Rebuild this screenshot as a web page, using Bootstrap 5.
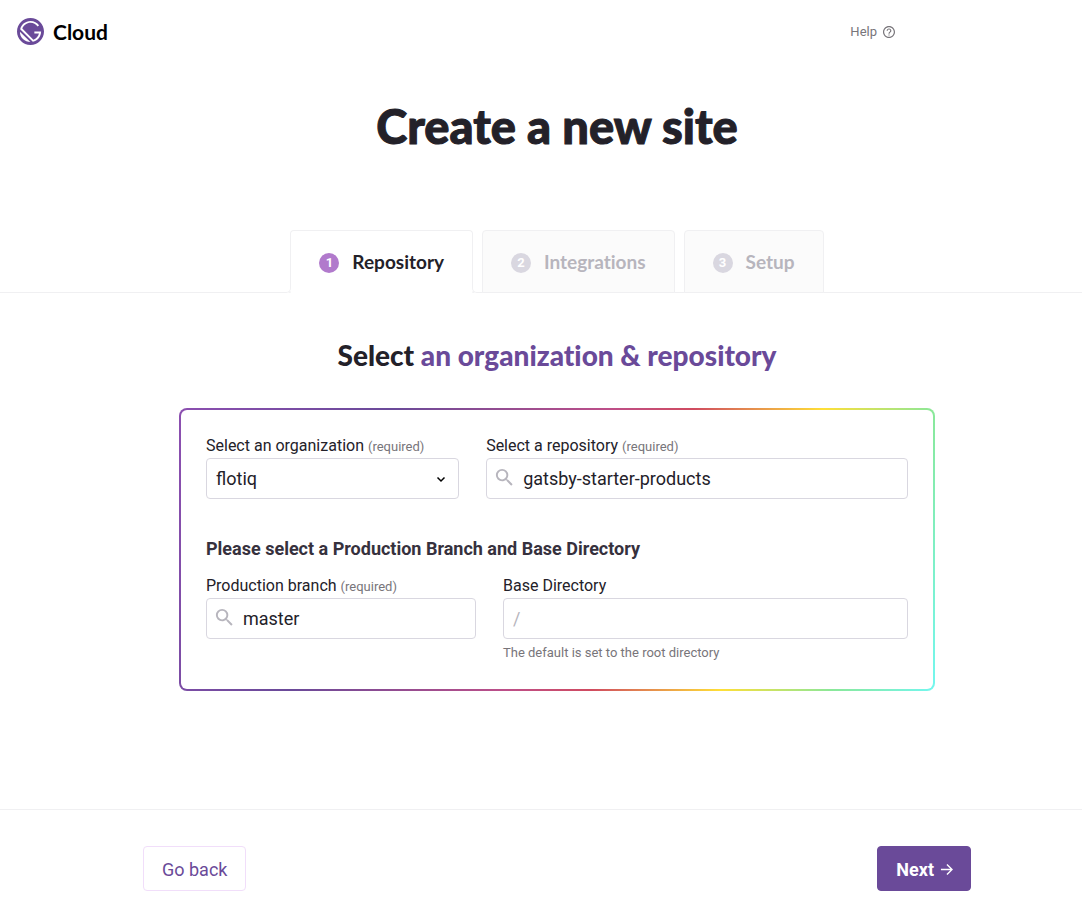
<!DOCTYPE html>
<html lang="en">
<head>
<meta charset="utf-8">
<meta name="viewport" content="width=device-width, initial-scale=1">
<title>Create a new site – Cloud</title>
<link href="https://cdn.jsdelivr.net/npm/bootstrap@5.3.0/dist/css/bootstrap.min.css" rel="stylesheet">
<style>
:root { --ink: #232129; --purple: #6a4a99; --line: #f0f0f2; --field: #d9d7e0; --muted: #78757a; --gutter: 32px; }
body { font-family: Roboto, "Liberation Sans", sans-serif; color: var(--ink); background: #fff; }
.display-face { font-family: "Futura PT", Lato, "Open Sans", sans-serif; font-variant-ligatures: none; }
.site-header { height: 63px; padding-left: 17px; padding-right: 187px; }
.brand { gap: 9px; color: #000; font-size: 21px; font-weight: 700; }
.help-link { gap: 6px; color: var(--muted); font-size: 13px; }
.offset-block { padding-left: var(--gutter); }
.page-title { font-size: 47px; line-height: 56px; font-weight: 900; margin: 35px 0 76px; -webkit-text-stroke: 1px currentColor; }
.steps { border-bottom: 1px solid var(--line); gap: 9px; }
.step { position: relative; display: flex; align-items: center; gap: 13px; height: 63px; margin-bottom: -1px; padding: 2px 28px 0; border: 1px solid var(--line); border-radius: 4px 4px 0 0; background: #fbfbfb; color: #b7b5bd; font-size: 19px; font-weight: 700; text-decoration: none; }
.step-number { width: 20px; height: 20px; border-radius: 50%; background: #d9d7e0; color: #fff; font: 700 13px/20px Roboto, sans-serif; text-align: center; }
.step.current { background: #fff; color: var(--ink); border-bottom-color: #fff; }
.step.current .step-number { background: #b17acc; }
.step.current::before, .step.current::after { content: ""; position: absolute; bottom: -1px; width: 6px; height: 6px; background: #fff; border: 0 solid var(--line); border-bottom-width: 1px; }
.step.current::before { right: 100%; border-right-width: 1px; border-bottom-right-radius: 5px; box-shadow: 1px 0 #fff; }
.step.current::after { left: 100%; border-left-width: 1px; border-bottom-left-radius: 5px; box-shadow: -1px 0 #fff; }
.section-title { font-size: 28px; line-height: 32px; font-weight: 900; margin: 46px 0 37px; }
.section-title span { color: var(--purple); }
.repo-panel { max-width: 756px; padding: 24px 25px 26px; border: 2px solid transparent; border-radius: 8px;
  background: linear-gradient(#fff, #fff) padding-box,
    linear-gradient(110deg, #8c4fb0 0%, #6a4a99 25%, #bd4f89 50%, #d04b60 60%, #ffdf37 75%, #8ae89a 88%, #73f7f0 100%) border-box; }
.field-row { display: grid; column-gap: 27px; row-gap: 16px; }
@media (min-width: 640px) {
  .field-row.source { grid-template-columns: 3fr 5fr; }
  .field-row.branch { grid-template-columns: 2fr 3fr; }
}
.field-label { display: block; font-size: 16px; line-height: 24px; }
.field-label small { font-size: 13px; line-height: 1; color: var(--muted); }
.repo-panel .form-control, .repo-panel .form-select { height: 41px; padding: 0 9px; border: 1px solid var(--field); border-radius: 4px; color: var(--ink); font-size: 18px; line-height: 39px; }
.repo-panel .form-control::placeholder { color: #b7b5bd; opacity: 1; }
.repo-panel .form-select { background-image: url("data:image/svg+xml,%3Csvg xmlns='http://www.w3.org/2000/svg' viewBox='0 0 10 10'%3E%3Cpath d='M1.500 3.500 5 7l3.500-3.500' fill='none' stroke='%23000' stroke-width='1.500'/%3E%3C/svg%3E"); background-size: 10px 10px; background-position: right 12px center; }
.search-box { position: relative; }
.repo-panel .search-box .form-control { padding-left: 36px; }
.search-box svg { position: absolute; left: 7px; top: 8px; }
.panel-heading { font-size: 18px; line-height: 24px; font-weight: 700; color: #36313d; margin: 38px 0 13px; }
.hint { font-size: 13px; line-height: 20px; color: var(--muted); margin: 4px 0 0; }
.site-footer { border-top: 1px solid var(--line); padding-top: 36px; padding-bottom: 20px; }
.footer-inner { max-width: 828px; }
.footer-inner .btn { height: 45px; padding: 2px 18px 0; border-radius: 4px; font-size: 18px; }
.btn-back { color: var(--purple); border-color: #f1defa; background: #fff; }
.footer-inner .btn-next { color: #fff; background: var(--purple); border-color: var(--purple); font-weight: 700; gap: 6px; padding-right: 17px; }
.btn-back:hover { color: var(--purple); border-color: var(--purple); }
.footer-inner .btn-next:hover { background: #53397a; }
</style>
</head>
<body>
<div class="d-flex flex-column min-vh-100">
  <header class="site-header d-flex align-items-center justify-content-between">
    <a href="#" class="brand display-face d-flex align-items-center text-decoration-none">
      <svg width="27" height="27" viewBox="0 0 24 24" aria-hidden="true"><path fill="#6a4a99" d="M12 0C5.400 0 0 5.400 0 12s5.400 12 12 12 12-5.400 12-12S18.600 0 12 0zm0 2.571c3.171 0 5.915 1.460 7.629 3.858l-1.286 1.115C16.886 5.572 14.571 4.286 12 4.286c-3.343 0-6.171 2.143-7.286 5.143l9.857 9.857c2.486-.857 4.373-3 4.973-5.572h-4.115V12h6c0 4.457-3.172 8.228-7.372 9.170L2.830 9.944C3.772 5.743 7.543 2.570 12 2.570zm-9.429 9.600l9.344 9.258c-2.400-.086-4.801-.943-6.601-2.743-1.800-1.800-2.743-4.201-2.743-6.515z"/></svg>
      <span>Cloud</span>
    </a>
    <a href="#" class="help-link d-flex align-items-center text-decoration-none">Help
      <svg width="12" height="12" viewBox="0 0 24 24" fill="currentColor" aria-hidden="true"><path d="M11 18h2v-2h-2v2zm1-16C6.480 2 2 6.480 2 12s4.480 10 10 10 10-4.480 10-10S17.520 2 12 2zm0 18c-4.410 0-8-3.590-8-8s3.590-8 8-8 8 3.590 8 8-3.590 8-8 8zm0-14c-2.210 0-4 1.790-4 4h2c0-1.100.9-2 2-2s2 .9 2 2c0 2-3 1.750-3 5h2c0-2.250 3-2.500 3-5 0-2.210-1.790-4-4-4z" transform="translate(-2.400 -2.400) scale(1.200)"/></svg>
    </a>
  </header>

  <main class="flex-grow-1">
    <h1 class="page-title display-face offset-block text-center">Create a new site</h1>
    <nav class="steps display-face offset-block d-flex justify-content-center" aria-label="Steps">
      <a href="#" class="step current" aria-current="step"><span class="step-number">1</span>Repository</a>
      <a href="#" class="step"><span class="step-number">2</span>Integrations</a>
      <a href="#" class="step"><span class="step-number">3</span>Setup</a>
    </nav>
    <h2 class="section-title display-face offset-block text-center">Select <span>an organization &amp; repository</span></h2>
    <div class="offset-block">
      <form class="repo-panel mx-auto">
        <div class="field-row source">
          <div>
            <label class="field-label" for="org">Select an organization <small>(required)</small></label>
            <select id="org" class="form-select"><option>flotiq</option></select>
          </div>
          <div>
            <label class="field-label" for="repo">Select a repository <small>(required)</small></label>
            <div class="search-box">
              <input id="repo" type="text" class="form-control" value="gatsby-starter-products">
              <svg width="23" height="23" viewBox="0 0 24 24" fill="#b7b5bd" aria-hidden="true"><path d="M15.500 14h-.79l-.28-.27A6.471 6.471 0 0 0 16 9.500 6.500 6.500 0 1 0 9.500 16c1.610 0 3.090-.59 4.230-1.570l.27.28v.79l5 4.990L20.490 19l-4.990-5zm-6 0C7.010 14 5 11.990 5 9.500S7.010 5 9.500 5 14 7.010 14 9.500 11.990 14 9.500 14z"/></svg>
            </div>
          </div>
        </div>
        <h3 class="panel-heading">Please select a Production Branch and Base Directory</h3>
        <div class="field-row branch">
          <div>
            <label class="field-label" for="branch">Production branch <small>(required)</small></label>
            <div class="search-box">
              <input id="branch" type="text" class="form-control" value="master">
              <svg width="23" height="23" viewBox="0 0 24 24" fill="#b7b5bd" aria-hidden="true"><path d="M15.500 14h-.79l-.28-.27A6.471 6.471 0 0 0 16 9.500 6.500 6.500 0 1 0 9.500 16c1.610 0 3.090-.59 4.230-1.570l.27.28v.79l5 4.990L20.490 19l-4.990-5zm-6 0C7.010 14 5 11.990 5 9.500S7.010 5 9.500 5 14 7.010 14 9.500 11.990 14 9.500 14z"/></svg>
            </div>
          </div>
          <div>
            <label class="field-label" for="base-dir">Base Directory</label>
            <input id="base-dir" type="text" class="form-control" placeholder="/" aria-describedby="base-hint">
            <p id="base-hint" class="hint">The default is set to the root directory</p>
          </div>
        </div>
      </form>
    </div>
  </main>

  <footer class="site-footer offset-block">
    <div class="footer-inner mx-auto d-flex justify-content-between">
      <button type="button" class="btn btn-back">Go back</button>
      <button type="button" class="btn btn-next d-flex align-items-center">Next
        <svg width="13" height="13" viewBox="0 0 14 14" fill="none" stroke="currentColor" stroke-width="1.500" aria-hidden="true"><path d="M1 7h11.500M7.500 1.500 13 7l-5.500 5.500"/></svg>
      </button>
    </div>
  </footer>
</div>
<script src="https://cdn.jsdelivr.net/npm/bootstrap@5.3.0/dist/js/bootstrap.bundle.min.js"></script>
</body>
</html>
